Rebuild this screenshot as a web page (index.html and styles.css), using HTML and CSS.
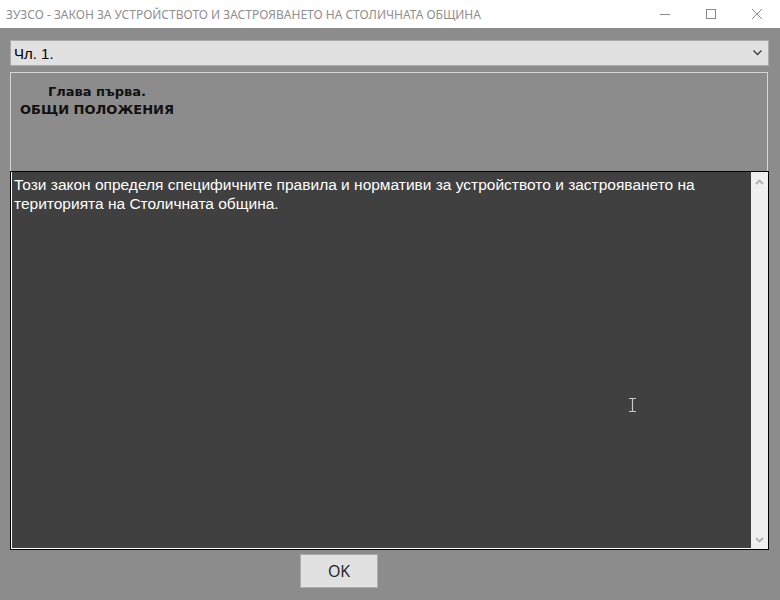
FILE: index.html
```html
<!DOCTYPE html>
<html lang="bg">
<head>
<meta charset="utf-8">
<title>ЗУЗСО</title>
<link rel="stylesheet" href="styles.css">
</head>
<body>
<div class="window">
  <div class="titlebar">
    <div class="title">ЗУЗСО - ЗАКОН ЗА УСТРОЙСТВОТО И ЗАСТРОЯВАНЕТО НА СТОЛИЧНАТА ОБЩИНА</div>
    <div class="controls">
      <span class="ctl"><svg width="12" height="12" viewBox="0 0 12 12"><path d="M1 6.5h10" stroke="#8a8a8a" stroke-width="1"/></svg></span>
      <span class="ctl"><svg width="12" height="12" viewBox="0 0 12 12"><rect x="1.5" y="1.5" width="9" height="9" fill="none" stroke="#8a8a8a" stroke-width="1"/></svg></span>
      <span class="ctl"><svg width="12" height="12" viewBox="0 0 12 12"><path d="M1 1l10 10M11 1L1 11" stroke="#8a8a8a" stroke-width="1"/></svg></span>
    </div>
  </div>
  <div class="main">
    <div class="combo">
      <span class="combo-text">Чл. 1.</span>
      <svg class="combo-arrow" width="9" height="6" viewBox="0 0 9 6"><path d="M0.5 0.5l4 4 4-4" fill="none" stroke="#3c3c3c" stroke-width="1.3"/></svg>
    </div>
    <div class="panel">
      <div class="heading">
        <div>Глава първа.</div>
        <div>ОБЩИ ПОЛОЖЕНИЯ</div>
      </div>
    </div>
    <div class="textbox">
      <div class="text">Този закон определя специфичните правила и нормативи за устройството и застрояването на територията на Столичната община.</div>
      <div class="scrollbar">
        <svg width="9" height="6" viewBox="0 0 9 6"><path d="M1 5l3.5-3.5L8 5" fill="none" stroke="#b0b0b0" stroke-width="1.8"/></svg>
        <svg width="9" height="6" viewBox="0 0 9 6"><path d="M1 1l3.5 3.5L8 1" fill="none" stroke="#b0b0b0" stroke-width="1.8"/></svg>
      </div>
      <svg class="ibeam" width="9" height="16" viewBox="0 0 9 16"><path d="M1 1.5h7M1 14.5h7M4.5 1.5v13" fill="none" stroke="#c8c8c8" stroke-width="1.2"/></svg>
    </div>
    <div class="actions">
      <button class="ok">OK</button>
    </div>
  </div>
</div>
</body>
</html>
```

FILE: styles.css
```css
html, body {
  margin: 0;
  padding: 0;
  background: #8c8c8c;
}
.window {
  width: 780px;
  height: 600px;
  display: flex;
  flex-direction: column;
}
.titlebar {
  height: 28px;
  background: #ffffff;
  display: flex;
  align-items: center;
  justify-content: space-between;
}
.title {
  padding-left: 6px;
  font-family: "Noto Sans", "Open Sans", sans-serif;
  font-size: 12px;
  color: #8f8f8f;
  white-space: nowrap;
}
.controls {
  display: flex;
  height: 28px;
}
.ctl {
  width: 46px;
  display: flex;
  align-items: center;
  justify-content: center;
}
.main {
  flex: 1;
  background: #8c8c8c;
  padding: 12px 11px 0 10px;
  display: flex;
  flex-direction: column;
}
.combo {
  height: 26px;
  box-sizing: border-box;
  border: 1px solid #a9a9a9;
  background: #e1e1e1;
  display: flex;
  align-items: center;
  justify-content: space-between;
  padding: 0 6px 0 3px;
}
.combo-text {
  font-family: "Liberation Sans", Arial, sans-serif;
  font-size: 15px;
  color: #000;
}
.panel {
  margin-top: 6px;
  height: 99px;
  box-sizing: border-box;
  border: 1px solid #d6d6d6;
  border-bottom: none;
  margin-right: 1px;
  padding: 10px 0 0 9px;
}
.heading {
  display: inline-block;
  text-align: center;
  font-family: "DejaVu Sans", sans-serif;
  font-weight: bold;
  font-size: 13px;
  line-height: 18px;
  color: #111;
}
.textbox {
  position: relative;
  height: 379px;
  box-sizing: border-box;
  border: 1px solid #000;
  background: #404040;
  box-shadow: inset 1px -1px 0 #ffffff;
  display: flex;
}
.text {
  flex: 1;
  padding: 3px 10px 0 3px;
  font-family: "Liberation Sans", Arial, sans-serif;
  font-size: 15.5px;
  line-height: 19px;
  color: #ffffff;
}
.scrollbar {
  width: 17px;
  background: #f0f0f0;
  display: flex;
  flex-direction: column;
  justify-content: space-between;
  align-items: center;
  padding: 7px 0 6px;
}
.ibeam {
  position: absolute;
  left: 617px;
  top: 225px;
}
.actions {
  padding-top: 4px;
  padding-left: 290px;
}
.ok {
  width: 78px;
  height: 34px;
  border: 1px solid #adadad;
  background: #e1e1e1;
  font-family: "Open Sans", "Noto Sans", sans-serif;
  font-size: 16px;
  color: #1a1a1a;
  padding: 0;
}
```
